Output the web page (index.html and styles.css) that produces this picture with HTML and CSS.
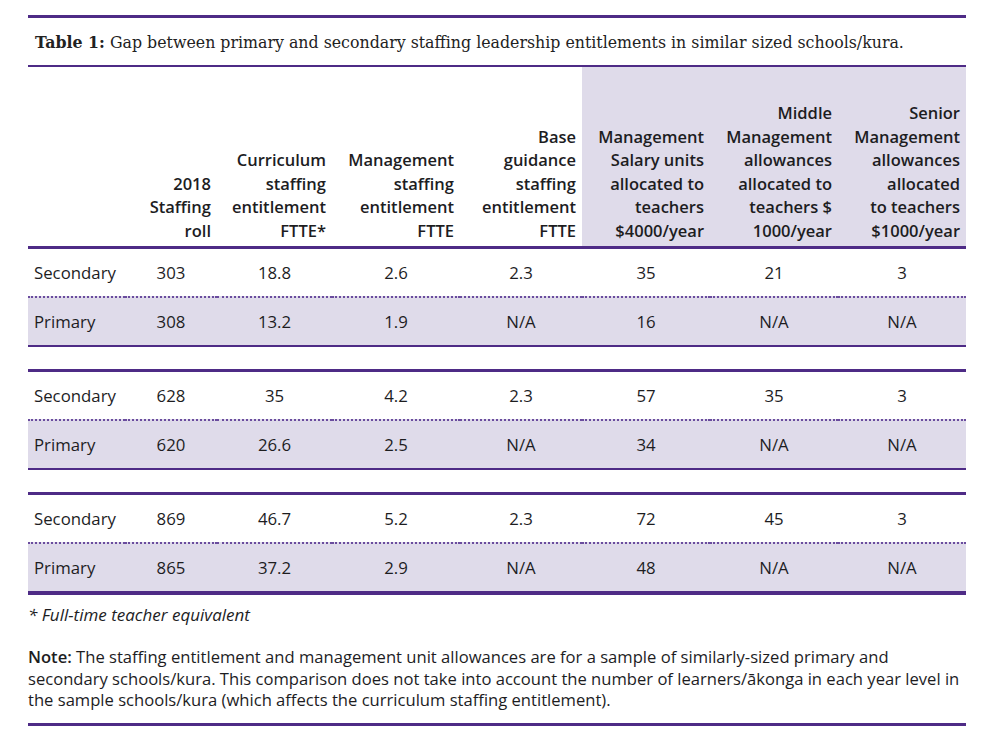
FILE: index.html
```html
<!DOCTYPE html>
<html lang="en">
<head>
<meta charset="utf-8">
<title>Table 1</title>
<link rel="stylesheet" href="styles.css">
</head>
<body>
<div class="page">
  <div class="rule-top"></div>
  <div class="caption"><b>Table 1:</b> Gap between primary and secondary staffing leadership entitlements in similar sized schools/kura.</div>
  <table class="data">
    <colgroup>
      <col style="width:97px"><col style="width:92px"><col style="width:115px"><col style="width:128px">
      <col style="width:122px"><col style="width:128px"><col style="width:128px"><col style="width:128px">
    </colgroup>
    <thead>
      <tr>
        <th></th>
        <th>2018<br>Staffing<br>roll</th>
        <th>Curriculum<br>staffing<br>entitlement<br>FTTE*</th>
        <th>Management<br>staffing<br>entitlement<br>FTTE</th>
        <th>Base<br>guidance<br>staffing<br>entitlement<br>FTTE</th>
        <th class="shade">Management<br>Salary units<br>allocated to<br>teachers<br>$4000/year</th>
        <th class="shade">Middle<br>Management<br>allowances<br>allocated to<br>teachers $<br>1000/year</th>
        <th class="shade">Senior<br>Management<br>allowances<br>allocated<br>to teachers<br>$1000/year</th>
      </tr>
    </thead>
    <tbody>
      <tr class="sec first">
        <td>Secondary</td><td>303</td><td>18.8</td><td>2.6</td><td>2.3</td><td>35</td><td>21</td><td>3</td>
      </tr>
      <tr class="pri">
        <td>Primary</td><td>308</td><td>13.2</td><td>1.9</td><td>N/A</td><td>16</td><td>N/A</td><td>N/A</td>
      </tr>
      <tr class="gap"><td colspan="8"></td></tr>
      <tr class="sec">
        <td>Secondary</td><td>628</td><td>35</td><td>4.2</td><td>2.3</td><td>57</td><td>35</td><td>3</td>
      </tr>
      <tr class="pri">
        <td>Primary</td><td>620</td><td>26.6</td><td>2.5</td><td>N/A</td><td>34</td><td>N/A</td><td>N/A</td>
      </tr>
      <tr class="gap"><td colspan="8"></td></tr>
      <tr class="sec">
        <td>Secondary</td><td>869</td><td>46.7</td><td>5.2</td><td>2.3</td><td>72</td><td>45</td><td>3</td>
      </tr>
      <tr class="pri last">
        <td>Primary</td><td>865</td><td>37.2</td><td>2.9</td><td>N/A</td><td>48</td><td>N/A</td><td>N/A</td>
      </tr>
    </tbody>
  </table>
  <p class="footnote">* Full-time teacher equivalent</p>
  <p class="note"><b>Note:</b> The staffing entitlement and management unit allowances are for a sample of similarly-sized primary and<br>secondary schools/kura. This comparison does not take into account the number of learners/ākonga in each year level in<br>the sample schools/kura (which affects the curriculum staffing entitlement).</p>
</div>
</body>
</html>
```
FILE: styles.css
```css
html, body {
  margin: 0;
  padding: 0;
  background: #ffffff;
}

.page {
  width: 938px;
  margin-left: 28px;
  padding-top: 15px;
  color: #1d1d1f;
  font-family: "Open Sans", "Noto Sans", sans-serif;
}

.rule-top {
  height: 3px;
  background: #4e2b86;
}

.caption {
  font-family: "DejaVu Serif", "Liberation Serif", serif;
  font-size: 15.8px;
  line-height: 20px;
  padding: 15px 0 12px 7px;
  color: #222;
  white-space: nowrap;
}

.caption b {
  font-weight: bold;
}

.data {
  width: 938px;
  border-collapse: separate;
  border-spacing: 0;
  table-layout: fixed;
}

.data th {
  height: 175px;
  padding: 0 6px 4px 0;
  border-top: 2px solid #4e2b86;
  border-bottom: 3px solid #4e2b86;
  vertical-align: bottom;
  text-align: right;
  font-size: 16.5px;
  font-weight: 600;
  line-height: 23.5px;
  color: #1d1d1f;
  white-space: nowrap;
}

.data th.shade {
  background: #dfdbea;
}

.data td {
  padding: 1px 0 0 0;
  line-height: 46px;
  text-align: center;
  font-size: 16.8px;
  white-space: nowrap;
}

.data td:first-child {
  text-align: left;
  padding-left: 6px;
}

.data tr.sec td {
  border-top: 3px solid #4e2b86;
}

.data tr.sec.first td {
  border-top: 0;
}

.data tr.pri td {
  background: #dfdbea;
  border-top: 2px dotted #6a4c9e;
  border-bottom: 2px solid #4e2b86;
}

.data tr.pri.last td {
  border-bottom: 4px solid #4e2b86;
}

.data tr.gap td {
  height: 22px;
  padding: 0;
  line-height: 0;
  background: transparent;
}

.footnote {
  margin: 0;
  padding-top: 9px;
  font-size: 17px;
  font-style: italic;
  line-height: 22px;
}

.note {
  margin: 20px 0 0 0;
  padding: 0 0 12px 0;
  font-size: 16.6px;
  line-height: 21.5px;
  border-bottom: 3px solid #4e2b86;
  white-space: nowrap;
}

.note b {
  font-weight: 600;
}
```
